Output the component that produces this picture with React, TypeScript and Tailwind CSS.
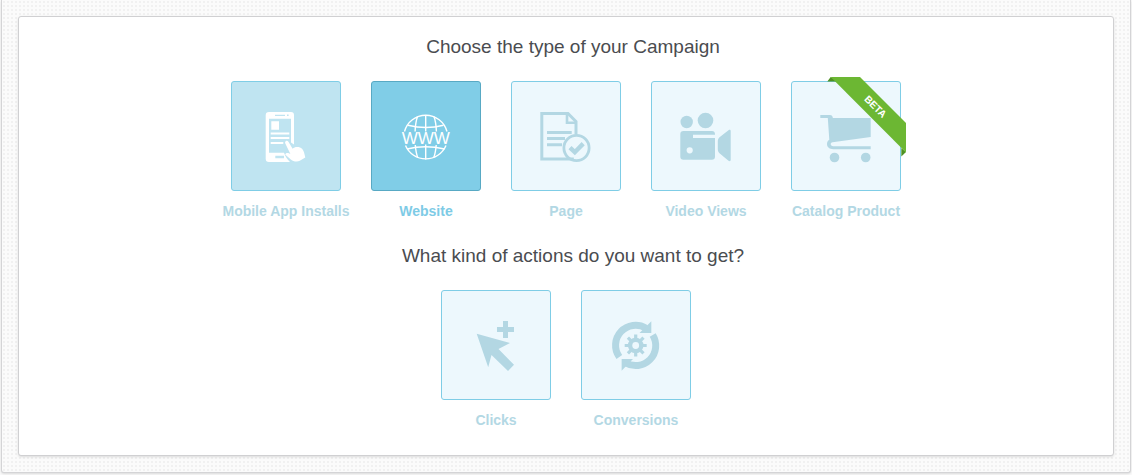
import React, { useState } from 'react';

interface Option {
    id: string;
    label: string;
    icon: React.ReactNode;
    beta?: boolean;
    hovered?: boolean;
}

const PhoneIcon = () => (
    <svg width="60" height="60" viewBox="0 0 60 60" fill="currentColor" aria-hidden="true">
        <path
            fillRule="evenodd"
            d="M13 6h22a3 3 0 0 1 3 3v29.500l-3-2V12.700H13v34h15c1 3 3 6.500 6 9.300H13a3.300 3.300 0 0 1-3.300-3.300V9.300A3.300 3.300 0 0 1 13 6zM19 8.700v1.300h10V8.700zM31 8.600v1.500h1.600V8.600zM19.300 49.700v2.600H28v-2.600z"
        />
        <path d="M15.300 15.300H23v8.400h-7.700zM14.700 26.500h18.600v2H14.700zM14.700 31h18.600v2H14.700zM14.700 36h12.600v2H14.700z" />
        <path d="M29.700 35.200c1-.7 2.200-.4 2.900.8l4 6.800c1.400-1.600 3.800-2.200 6-1.700 3 .6 4.600 2.600 5.400 5.200l1.300 5.200-5.500 3.300c-3 1.500-7 .4-9.300-1.600l-5.300-4.600c.3-1.600 2-2 3.700-1.300l1.500.6-5.100-10.500c-.4-.8-.3-1.700.4-2.200z" />
    </svg>
);

const GlobeIcon = () => (
    <svg width="60" height="60" viewBox="0 0 60 60" fill="none" stroke="currentColor" strokeWidth="1.400" aria-hidden="true">
        <path d="M8.500 25.500a22 22 0 0 1 42.500 0M9.500 39.500a22 22 0 0 0 40.500 0" />
        <path d="M29.700 9.500v16M29.700 38.500v15M21.500 10.500c-1.400 4-2.200 9-2.400 15M38 10.500c1.400 4 2.200 9 2.400 15M19.300 39c.4 5 1.200 9.500 2.500 12.800M40.200 39c-.4 5-1.200 9.500-2.500 12.800" />
        <path d="M12 19.300c11 2.700 25 2.700 35.500 0M11 43c11-2.700 26-2.700 37.500 0" />
        <text
            x="29.700"
            y="38"
            textAnchor="middle"
            fill="currentColor"
            stroke="none"
            fontSize="17"
            fontFamily="'Liberation Sans', Arial, sans-serif"
        >
            WWW
        </text>
    </svg>
);

const PageIcon = () => (
    <svg width="60" height="60" viewBox="0 0 60 60" fill="none" stroke="currentColor" aria-hidden="true">
        <path d="M40 28.500V15.500L32 7.500H5.800V53h32" strokeWidth="3" />
        <path d="M31 7v9.800h10" strokeWidth="2.600" />
        <path d="M11 26.400h24.700M11 32.500h18M11 38.700h15" strokeWidth="3" />
        <circle cx="40.500" cy="42" r="12.600" strokeWidth="2.800" />
        <path d="M34 41.700l4.800 4.500 8.400-8.600" strokeWidth="4.400" />
    </svg>
);

const VideoIcon = () => (
    <svg width="60" height="60" viewBox="0 0 60 60" fill="currentColor" aria-hidden="true">
        <circle cx="10.700" cy="16" r="6.200" />
        <circle cx="29.500" cy="14.500" r="7.800" />
        <path
            fillRule="evenodd"
            d="M7.500 25H36a3.200 3.200 0 0 1 3 3v.7H17v3.300h22v18.500a3.200 3.200 0 0 1-3.200 3.200H7.500a3.200 3.200 0 0 1-3.200-3.200V28.200A3.200 3.200 0 0 1 7.500 25zM13.700 41.200a3.100 3.100 0 1 0 0 6.200 3.100 3.100 0 0 0 0-6.200z"
        />
        <path d="M52.500 24.200c1-.8 2.200-.4 2.200.7v29.200c0 1.100-1.200 1.500-2.200.7l-9-7.500c-1.300-1.200-1.700-2.500-1.700-4v-8c0-1.500.4-2.800 1.700-4z" />
    </svg>
);

const CartIcon = () => (
    <svg width="60" height="60" viewBox="0 0 60 60" fill="currentColor" aria-hidden="true">
        <path d="M4.300 9H14c1.500 0 2.300.8 2.700 2.200l.2.800h37.800v19L16.500 36.200c-1.200.4-1.800 1-1.800 1.900 0 1.300 1 2.200 2.500 2.200h37.500v3H17.200c-3.600 0-6.200-2-6.200-5.200 0-1.800.8-3.300 2.300-4.300L11.800 12H4.300z" />
        <circle cx="18.500" cy="51.500" r="4.800" />
        <circle cx="49.700" cy="51.500" r="4.800" />
    </svg>
);

const CursorIcon = () => (
    <svg width="60" height="60" viewBox="0 0 60 60" fill="currentColor" aria-hidden="true">
        <path d="M10.700 18.700l33.300 9.300-11.500 6L48 49.800l-6 6.200-16.500-16L22.200 52.300z" />
        <path d="M37 6h5v6h6v5h-6v6h-5v-6h-6v-5h6z" />
    </svg>
);

const ConversionIcon = () => (
    <svg width="60" height="60" viewBox="0 0 60 60" aria-hidden="true">
        <g fill="none" stroke="currentColor" strokeWidth="7">
            <path d="M13.300 42A20 20 0 0 1 40 13.300" />
            <path d="M46.700 20A20 20 0 0 1 19.400 47.700" />
        </g>
        <g fill="currentColor">
            <path d="M45.300 6.300V18H33.500z" />
            <path d="M15.600 55.700V44H27z" />
            <circle cx="29.700" cy="30.500" r="7.800" />
        </g>
        <g stroke="currentColor" strokeWidth="3.200">
            <path d="M29.700 19.500v22M18.700 30.500h22M21.900 22.700l15.600 15.600M37.500 22.700L21.900 38.300" />
        </g>
        <circle cx="29.700" cy="30.500" r="3.400" fill="#edf8fd" />
    </svg>
);

const BetaRibbon = () => (
    <svg className="absolute -top-[5px] left-[31px] pointer-events-none" width="83" height="80" viewBox="0 0 83 80">
        <path d="M4.300 4.500L7.700 0l8 4.500z" fill="#4f9124" />
        <path d="M78.300 71v8.500l4.700-4.500z" fill="#4f9124" />
        <path d="M7.700 0H37l46 46v29.500z" fill="#6cb733" />
        <text
            transform="translate(50 32) rotate(45)"
            textAnchor="middle"
            fill="#fff"
            fontSize="10"
            fontWeight="bold"
            fontFamily="'Liberation Sans', Arial, sans-serif"
        >
            BETA
        </text>
    </svg>
);

const campaignTypes: Option[] = [
    { id: 'mobile', label: 'Mobile App Installs', icon: <PhoneIcon />, hovered: true },
    { id: 'website', label: 'Website', icon: <GlobeIcon /> },
    { id: 'page', label: 'Page', icon: <PageIcon /> },
    { id: 'video', label: 'Video Views', icon: <VideoIcon /> },
    { id: 'catalog', label: 'Catalog Product', icon: <CartIcon />, beta: true },
];

const actionTypes: Option[] = [
    { id: 'clicks', label: 'Clicks', icon: <CursorIcon /> },
    { id: 'conversions', label: 'Conversions', icon: <ConversionIcon /> },
];

interface OptionPickerProps {
    title: string;
    options: Option[];
    selected: string | null;
    onSelect: (id: string) => void;
}

const OptionPicker: React.FC<OptionPickerProps> = ({ title, options, selected, onSelect }) => {
    const getTileClasses = (option: Option) => {
        if (option.id === selected) return 'bg-[#80cde7] border-[#58a9c4] text-white';
        if (option.hovered) return 'bg-[#bfe4f1] border-[#7fcde6] text-white';
        return 'bg-[#edf8fd] border-[#7fcde6] text-[#b3d7e3]';
    };

    return (
        <section>
            <h2 className="pl-3.5 text-center text-[19px] leading-6 text-[#4a4c50]">{title}</h2>
            <div className="mt-[22px] flex flex-wrap justify-center">
                {options.map(option => (
                    <button
                        key={option.id}
                        type="button"
                        aria-pressed={option.id === selected}
                        onClick={() => onSelect(option.id)}
                        className="flex w-[140px] flex-col items-center cursor-pointer"
                    >
                        <span className={`relative flex size-[110px] items-center justify-center rounded-[3px] border ${getTileClasses(option)}`}>
                            {option.icon}
                            {option.beta && <BetaRibbon />}
                        </span>
                        <span className={`mt-2.5 text-sm leading-5 font-bold whitespace-nowrap ${option.id === selected ? 'text-[#7ecbe6]' : 'text-[#b3d8e4]'}`}>
                            {option.label}
                        </span>
                    </button>
                ))}
            </div>
        </section>
    );
};

const App: React.FC = () => {
    const [campaign, setCampaign] = useState<string | null>('website');
    const [action, setAction] = useState<string | null>(null);

    return (
        <div className="bg-[#fafafa] px-px pb-0.5 font-['Liberation_Sans',Arial,sans-serif]">
            <main className="rounded-b-[3px] border-x border-b border-[#d4d4d6] bg-[#fbfbfb] bg-[radial-gradient(#f1f1f1_1px,transparent_1px)] bg-size-[4px_4px] p-4 shadow-sm">
                <div className="flex flex-col gap-[23px] rounded-[3px] border border-[#d0d0d2] bg-white pt-[18px] pb-[25px] shadow-sm">
                    <OptionPicker
                        title="Choose the type of your Campaign"
                        options={campaignTypes}
                        selected={campaign}
                        onSelect={setCampaign}
                    />
                    <OptionPicker
                        title="What kind of actions do you want to get?"
                        options={actionTypes}
                        selected={action}
                        onSelect={setAction}
                    />
                </div>
            </main>
        </div>
    );
};

export default App;
